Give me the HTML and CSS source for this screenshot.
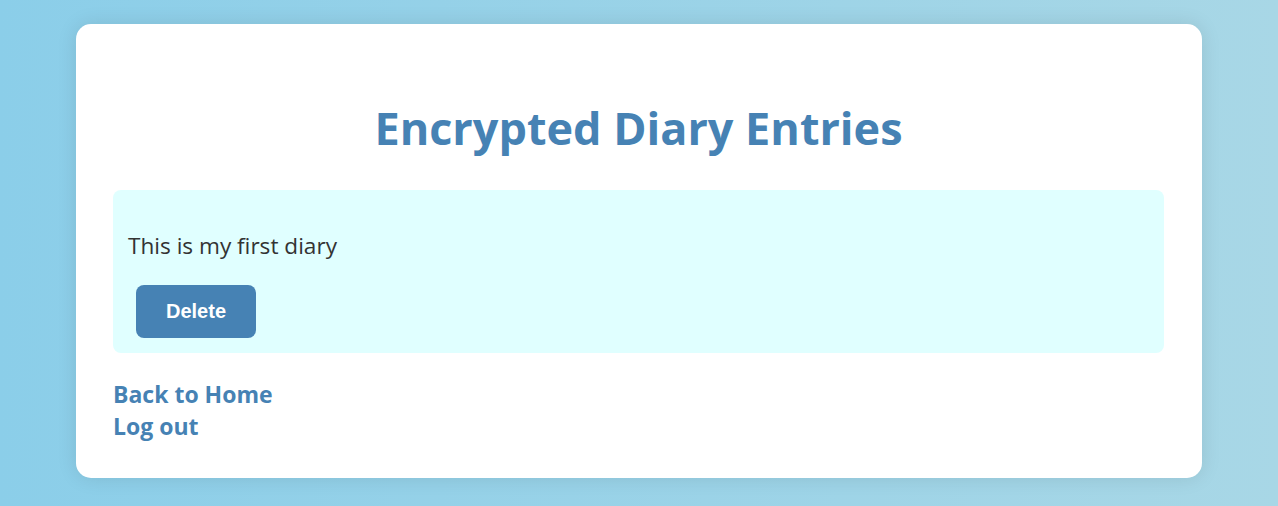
FILE: index.html
```html
<!DOCTYPE html>
<html lang="en">
<head>
<meta charset="utf-8">
<title>Encrypted Diary Entries</title>
<link rel="stylesheet" href="styles.css">
</head>
<body>
<div class="container">
  <h1 class="title">Encrypted Diary Entries</h1>
  <div class="entry">
    <p class="entry-text">This is my first diary</p>
    <button class="delete-btn" type="button">Delete</button>
  </div>
  <div class="links">
    <a class="link" href="#">Back to Home</a>
    <a class="link" href="#">Log out</a>
  </div>
</div>
</body>
</html>
```

FILE: styles.css
```css
html, body {
  margin: 0;
  padding: 0;
}

body {
  min-height: 506px;
  background: linear-gradient(to right, #8bcee9, #a8d7e6);
  font-family: "Open Sans", "Noto Sans", sans-serif;
  padding: 24px 0 28px;
  box-sizing: border-box;
}

.container {
  width: 1126px;
  margin: 0 auto;
  background: #ffffff;
  border-radius: 15px;
  box-shadow: 0 0 20px rgba(0, 0, 0, 0.1);
  padding: 40px 38px 36px 37px;
  box-sizing: border-box;
}

.title {
  margin: 32px 0 30px;
  text-align: center;
  color: #4682b4;
  font-size: 45px;
  line-height: 64px;
  font-weight: 700;
}

.entry {
  background: #e0ffff;
  border-radius: 8px;
  padding: 15px;
  display: flex;
  flex-direction: column;
  align-items: flex-start;
}

.entry-text {
  margin: 25px 0 23px;
  font-size: 22.6px;
  line-height: 32px;
  color: #333333;
}

.delete-btn {
  margin: 0 0 0 8px;
  padding: 15px 30px;
  border: none;
  border-radius: 8px;
  background: #4682b4;
  color: #ffffff;
  font-family: "Liberation Sans", Arial, sans-serif;
  font-weight: 700;
  font-size: 20px;
  line-height: 23px;
}

.links {
  margin-top: 25px;
  display: flex;
  flex-direction: column;
  align-items: flex-start;
}

.link {
  color: #4682b4;
  text-decoration: none;
  font-weight: 700;
  font-size: 23px;
  line-height: 32px;
}
```
